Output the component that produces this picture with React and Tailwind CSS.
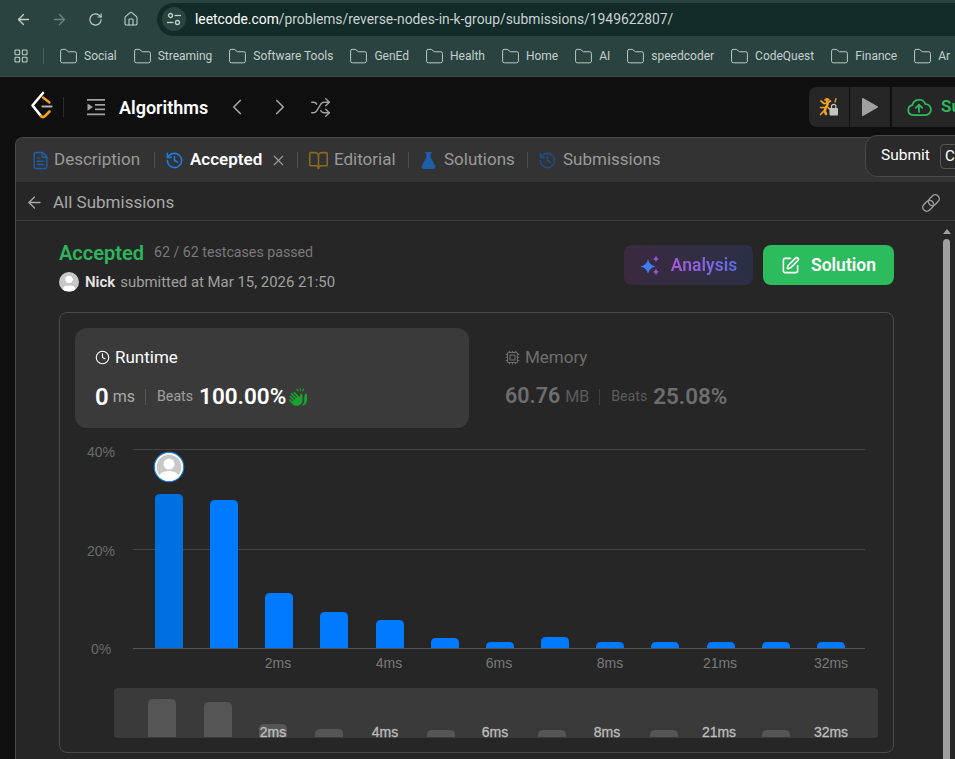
import React from "react";
import {
  ArrowLeft,
  ArrowRight,
  RotateCw,
  House,
  LayoutGrid,
  Folder,
  ChevronLeft,
  ChevronRight,
  Shuffle,
  History,
  BookOpen,
  FlaskConical,
  FileText,
  X,
  Clock,
  Cpu,
  SquarePen,
  User,
} from "lucide-react";
import { FaHandsClapping } from "react-icons/fa6";

const bookmarks = ["Social", "Streaming", "Software Tools", "GenEd", "Health", "Home", "AI", "speedcoder", "CodeQuest", "Finance", "Ar"];

const bars = [
  [155, 494], [210, 500], [265, 593], [320, 612], [376, 620], [431, 638], [486, 642],
  [541, 637], [596, 642], [651, 642], [707, 642], [762, 642], [817, 642],
];
const miniBars = [[148, 699], [204, 702], [259, 724], [315, 729], [427, 730], [538, 730], [650, 730], [762, 730]];
const labels = [["2ms", 278, 273], ["4ms", 389, 385], ["6ms", 499, 495], ["8ms", 610, 607], ["21ms", 720, 719], ["32ms", 831, 831]];

function barPath(x, top, bottom, w, r) {
  const rr = Math.min(r, bottom - top);
  return `M${x} ${bottom}V${top + rr}Q${x} ${top} ${x + rr} ${top}H${x + w - rr}Q${x + w} ${top} ${x + w} ${top + rr}V${bottom}Z`;
}

function Avatar({ size }) {
  return (
    <div className={`${size} rounded-full bg-[#c8c8c8] overflow-hidden flex items-end justify-center shrink-0`}>
      <User className="w-full h-full text-white translate-y-[8%]" fill="white" strokeWidth={1} />
    </div>
  );
}

function Logo() {
  return (
    <svg width="26" height="32" viewBox="28 91 26 32" fill="none" strokeLinecap="round" strokeLinejoin="round">
      <path d="M43 93 L32.5 105.5 L41 116" stroke="white" strokeWidth="2.6" />
      <path d="M41 116 Q43 118 45 116 L49.5 111.5" stroke="#f89f1b" strokeWidth="2.6" />
      <path d="M43 97.5 L49.5 102.5" stroke="#f89f1b" strokeWidth="2.4" />
      <path d="M42.5 106.5 H51.5" stroke="#b3b3b3" strokeWidth="2.2" />
    </svg>
  );
}

function ListIcon() {
  return (
    <svg width="18" height="18" viewBox="0 0 18 18" className="text-[#a3a3a3]" fill="currentColor">
      <rect x="0" y="1" width="18" height="1.7" />
      <rect x="8" y="6" width="10" height="1.7" />
      <rect x="8" y="10.5" width="10" height="1.7" />
      <rect x="0" y="15.5" width="18" height="1.7" />
      <path d="M0.5 5.5 L6 9 L0.5 12.8Z" />
    </svg>
  );
}

function SiteInfoIcon() {
  return (
    <svg width="16" height="16" viewBox="0 0 16 16" fill="none" stroke="currentColor" strokeWidth="1.3">
      <circle cx="4.5" cy="4.5" r="2" />
      <path d="M8.5 4.5H15" />
      <path d="M1 11.5H7.5" />
      <circle cx="11.5" cy="11.5" r="2" />
    </svg>
  );
}

function BugLockIcon() {
  return (
    <svg width="20" height="20" viewBox="0 0 20 20" fill="none" strokeLinecap="round">
      <g stroke="#f0a020" strokeWidth="1.7">
        <path d="M6 3 Q8 1 10 3" />
        <path d="M8 3.5 Q9.5 8 6.5 11 Q5 14 7 17" strokeWidth="2.6" />
        <path d="M2 4 L5 6.5 L8.5 6 L11.5 4" />
        <path d="M1.5 10.5 L5.5 10.5" />
        <path d="M1.5 17.5 L5 14" />
        <path d="M9 10.5 L10.5 12" />
        <path d="M17 1.5 L16 5" strokeWidth="1.3" />
      </g>
      <rect x="10.5" y="11" width="8.5" height="7.5" rx="1" fill="#c4c4c4" />
      <path d="M12.5 11 V9.5 a2.2 2.2 0 0 1 4.4 0 V11" stroke="#c4c4c4" strokeWidth="1.2" />
    </svg>
  );
}

function CloudIcon() {
  return (
    <svg width="26" height="26" viewBox="0 0 24 24" fill="none" stroke="#2cbb5d" strokeWidth="1.6" strokeLinecap="round" strokeLinejoin="round">
      <path d="M6.5 19.5a4.7 4.7 0 0 1-.6-9.3 6.3 6.3 0 0 1 12-.9 5.1 5.1 0 0 1 .1 10.2Z" />
      <path d="M12 16.5v-6.5M9 12.8l3-3 3 3" />
    </svg>
  );
}

function ChainIcon() {
  return (
    <svg width="22" height="22" viewBox="0 0 22 22" fill="none" stroke="#9a9a9a" strokeWidth="1.5" className="-rotate-45">
      <rect x="1" y="7" width="12" height="8" rx="4" />
      <rect x="9" y="7" width="12" height="8" rx="4" />
    </svg>
  );
}

function SparkIcon() {
  return (
    <svg width="21" height="21" viewBox="0 0 21 21">
      <path d="M8 4 Q9 10 15.5 11.5 Q9 13 8 19 Q7 13 0.5 11.5 Q7 10 8 4Z" fill="#3f7cf5" />
      <path d="M16 0.5 Q16.5 3.5 19 4 Q16.5 4.5 16 7 Q15.5 4.5 13 4 Q15.5 3.5 16 0.5Z" fill="#9a55d8" />
      <path d="M16 13.5 Q16.5 16 19 16.8 Q16.5 17.5 16 20.5 Q15.5 17.5 13 16.8 Q15.5 16 16 13.5Z" fill="#9a55d8" />
    </svg>
  );
}

function Sep() {
  return <div className="w-px h-[16px] bg-[#4d4d4d]" />;
}

function Chart() {
  return (
    <svg width="832" height="324" viewBox="60 428 832 324" className="block" style={{ fontFamily: "'Liberation Sans', sans-serif" }}>
      <line x1="133" x2="865" y1="449.5" y2="449.5" stroke="#444" />
      <line x1="133" x2="865" y1="549.5" y2="549.5" stroke="#444" />
      {bars.map(([x, top], i) => (
        <path key={x} d={barPath(x, top, 648, 28, 5)} fill={i === 0 ? "#006fe0" : "#007aff"} />
      ))}
      <line x1="133" x2="865" y1="648.5" y2="648.5" stroke="#555" />
      <text x="101" y="457" textAnchor="middle" fontSize="14" fill="#6b6b6b">40%</text>
      <text x="101" y="556" textAnchor="middle" fontSize="14" fill="#6b6b6b">20%</text>
      <text x="101" y="654" textAnchor="middle" fontSize="14" fill="#6b6b6b">0%</text>
      {labels.map(([t, x]) => (
        <text key={t} x={x} y="668" textAnchor="middle" fontSize="14" fill="#7a7a7a">{t}</text>
      ))}
      <rect x="114" y="688" width="764" height="50" rx="4" fill="#3a3a3a" />
      {miniBars.map(([x, top]) => (
        <path key={x} d={barPath(x, top, 737, 28, 5)} fill="#555" />
      ))}
      {labels.map(([t, , x]) => (
        <text key={t} x={x} y="737" textAnchor="middle" fontSize="14" fill="#bdbdbd" stroke="#bdbdbd" strokeWidth="0.3">{t}</text>
      ))}
      <circle cx="169" cy="467" r="14.5" fill="#c8c8c8" stroke="#1a7de0" strokeWidth="1.6" />
      <circle cx="169" cy="467" r="13.2" fill="none" stroke="white" strokeWidth="1.8" />
      <circle cx="169" cy="464" r="5.5" fill="white" />
      <path d="M159 477 Q160 471 169 471 Q178 471 179 477 Q174 481 169 481 Q164 481 159 477Z" fill="white" />
    </svg>
  );
}

export default function App() {
  return (
    <div className="relative w-[955px] h-[759px] overflow-hidden bg-[#0f0f0f] font-['Roboto',sans-serif]">
      {/* browser chrome */}
      <div className="h-[36px] bg-[#2b4340] flex items-center pt-[2px]">
        <div className="flex items-center w-[157px] pl-[15px] text-[#c4cfcd]">
          <ArrowLeft size={17} strokeWidth={1.8} />
          <ArrowRight size={17} strokeWidth={1.8} className="ml-[19px] text-[#6f8380]" />
          <RotateCw size={15} strokeWidth={1.8} className="ml-[20px]" />
          <House size={16} strokeWidth={1.6} className="ml-[20px]" />
        </div>
        <div className="flex-1 h-[33px] bg-[#122a28] rounded-l-full flex items-center pl-[5px]">
          <div className="w-[24px] h-[24px] rounded-full bg-[#2b4340] flex items-center justify-center text-[#c4cfcd]">
            <SiteInfoIcon />
          </div>
          <span className="ml-[9px] text-[13.85px] text-[#c9d3d1]">
            <span className="text-white">leetcode.com</span>/problems/reverse-nodes-in-k-group/submissions/1949622807/
          </span>
        </div>
      </div>
      <div className="h-[41px] bg-[#2b4340] border-b border-[#3b4f4d] flex items-center pl-[13px] text-[#c4cfcd] whitespace-nowrap">
        <LayoutGrid size={16} strokeWidth={1.6} />
        <div className="w-px h-[16px] bg-[#4a605d] ml-[14px] mr-[15px]" />
        <div className="flex items-center gap-[16px]">
          {bookmarks.map((b) => (
            <div key={b} className="flex items-center gap-[6px] text-[12px]">
              <Folder size={19} strokeWidth={1.2} />
              <span>{b}</span>
            </div>
          ))}
        </div>
      </div>

      {/* leetcode nav */}
      <div className="h-[60px] flex items-center pl-[28px]">
        <Logo />
        <div className="w-px h-[20px] bg-[#2c2c2c] ml-[9px] mr-[23px]" />
        <ListIcon />
        <span className="ml-[14px] text-[18px] font-semibold text-white w-[90px]">Algorithms</span>
        <ChevronLeft size={26} strokeWidth={1.6} className="ml-[15px] text-[#a3a3a3]" />
        <ChevronRight size={26} strokeWidth={1.6} className="ml-[17px] text-[#a3a3a3]" />
        <Shuffle size={21} strokeWidth={1.6} className="ml-[17px] text-[#a3a3a3]" />
        <div className="ml-auto flex items-center h-[40px] gap-px">
          <div className="w-[40px] h-full bg-[#262626] rounded-l-lg flex items-center justify-center">
            <BugLockIcon />
          </div>
          <div className="w-[40px] h-full bg-[#262626] flex items-center justify-center">
            <svg width="18" height="20" viewBox="0 0 18 20">
              <path d="M2 2 L16 10 L2 18Z" fill="#a0a0a0" stroke="#a0a0a0" strokeWidth="2" strokeLinejoin="round" />
            </svg>
          </div>
          <div className="ml-px w-[63px] h-full bg-[#262626] flex items-center pl-[14px] gap-[9px] overflow-hidden">
            <div className="shrink-0"><CloudIcon /></div>
            <span className="text-[17px] font-semibold text-[#2cbb5d]">Su</span>
          </div>
        </div>
      </div>

      {/* panel */}
      <div className="ml-[15px] h-[622px] bg-[#262626] border-t border-l border-[#4a4a4a] rounded-tl-lg overflow-hidden flex flex-col">
        <div className="h-[44px] bg-[#333333] flex items-center pl-[15px] text-[17px] text-[#9a9a9a] whitespace-nowrap shrink-0">
          <FileText size={19} className="text-[#1d5fa8]" strokeWidth={1.8} />
          <span className="ml-[4px] mr-[13px] w-[87px]">Description</span>
          <Sep />
          <History size={19} className="ml-[10px] text-[#1a7de0]" strokeWidth={2} />
          <span className="ml-[6px] font-semibold text-white w-[73px]">Accepted</span>
          <X size={17} strokeWidth={1.6} className="ml-[7px] mr-[10px]" />
          <Sep />
          <BookOpen size={21} className="ml-[10px] text-[#8a6a20]" strokeWidth={1.8} />
          <span className="ml-[5px] mr-[12px] w-[62px]">Editorial</span>
          <Sep />
          <FlaskConical size={19} className="ml-[10px] text-[#1d5fa8]" fill="#1d5fa8" strokeWidth={1.6} />
          <span className="ml-[6px] mr-[11px] w-[72px]">Solutions</span>
          <Sep />
          <History size={19} className="ml-[10px] text-[#1d4f85]" strokeWidth={2} />
          <span className="ml-[6px]">Submissions</span>
        </div>
        <div className="h-[39px] border-b border-[#3a3a3a] flex items-center pl-[9px] pt-[3px] shrink-0 text-[#a8a8a8]">
          <ArrowLeft size={19} strokeWidth={1.7} />
          <span className="ml-[9px] text-[17px]">All Submissions</span>
          <div className="ml-auto mr-[13px]"><ChainIcon /></div>
        </div>

        <div className="flex-1 flex min-h-0">
          <div className="flex-1 pl-[43px] pr-[49px] pt-[24px]">
            <div className="flex items-start justify-between">
              <div className="-mt-[2px]">
                <div className="flex items-center gap-[10px] h-[20px]">
                  <span className="text-[20px] font-semibold text-[#2db55d]">Accepted</span>
                  <span className="text-[14.2px] text-[#7a7a7a]">62 / 62 testcases passed</span>
                </div>
                <div className="flex items-center mt-[9px] h-[20px]">
                  <Avatar size="w-[20px] h-[20px]" />
                  <span className="ml-[6px] text-[15px] font-semibold text-[#e5e5e5]">Nick</span>
                  <span className="ml-[5px] text-[14.9px] text-[#a0a0a0]">submitted at Mar 15, 2026 21:50</span>
                </div>
              </div>
              <div className="flex gap-[10px]">
                <div className="w-[129px] h-[40px] rounded-lg bg-gradient-to-r from-[#3a2a40] to-[#2a2f45] flex items-center justify-center gap-[10px]">
                  <SparkIcon />
                  <span className="text-[17.5px] font-semibold bg-gradient-to-r from-[#a855d8] to-[#5a6ce8] bg-clip-text text-transparent">Analysis</span>
                </div>
                <div className="w-[131px] h-[40px] rounded-lg bg-[#2cbb5d] flex items-center justify-center gap-[11px]">
                  <SquarePen size={19} className="text-white" strokeWidth={2} />
                  <span className="text-[17.5px] font-semibold text-white">Solution</span>
                </div>
              </div>
            </div>

            <div className="mt-[20px] h-[441px] border border-[#4a4a4a] rounded-lg overflow-hidden">
              <div className="flex mt-[15px] ml-[15px]">
                <div className="w-[394px] h-[100px] bg-[#3a3a3a] rounded-xl pl-[20px] pt-[17px]">
                  <div className="flex items-center gap-[5px] text-white">
                    <Clock size={15} strokeWidth={1.8} />
                    <span className="text-[17px]">Runtime</span>
                  </div>
                  <div className="flex items-center mt-[12px] h-[28px]">
                    <span className="text-[24px] font-semibold text-white">0</span>
                    <span className="ml-[4px] text-[16px] text-[#a8a8a8]">ms</span>
                    <div className="w-px h-[16px] bg-[#555] ml-[10px] mr-[11px]" />
                    <span className="text-[14.2px] text-[#a0a0a0]">Beats</span>
                    <span className="ml-[6px] text-[22.5px] font-semibold text-white">100.00%</span>
                    <FaHandsClapping size={18} className="ml-[3px] text-[#17a32e]" />
                  </div>
                </div>
                <div className="ml-[36px] pt-[17px] text-[#6e6e6e]">
                  <div className="flex items-center gap-[5px]">
                    <Cpu size={15} strokeWidth={1.8} />
                    <span className="text-[17px]">Memory</span>
                  </div>
                  <div className="flex items-center mt-[12px] h-[28px]">
                    <span className="text-[21.5px] font-semibold">60.76</span>
                    <span className="ml-[5px] text-[16px] text-[#5c5c5c]">MB</span>
                    <div className="w-px h-[16px] bg-[#3f3f3f] ml-[10px] mr-[11px]" />
                    <span className="text-[14.2px] text-[#5c5c5c]">Beats</span>
                    <span className="ml-[6px] text-[22.4px] font-semibold">25.08%</span>
                  </div>
                </div>
              </div>
              <Chart />
            </div>
          </div>
          {/* scrollbar */}
          <div className="w-[12px] shrink-0 pt-[7px] flex flex-col">
            <div className="w-[7px] h-[6px] ml-0 flex items-end justify-center">
              <div className="w-0 h-0 border-x-[4px] border-x-transparent border-b-[5px] border-b-[#a0a0a0]" />
            </div>
            <div className="w-[7px] flex-1 mt-[5px] bg-[#a0a0a0] rounded-t-full" />
          </div>
        </div>
      </div>

      {/* submit tooltip */}
      <div className="absolute left-[865px] top-[135px] w-[100px] h-[42px] bg-[#2a2a2a] border border-[#4a4a4a] rounded-l-xl flex items-center pl-[15px]">
        <span className="text-[15.5px] text-white">Submit</span>
        <div className="ml-[10px] w-[40px] h-[25px] border border-[#555] rounded-[4px] flex items-center pl-[4px] text-[15px] text-white">Ct</div>
      </div>
    </div>
  );
}
